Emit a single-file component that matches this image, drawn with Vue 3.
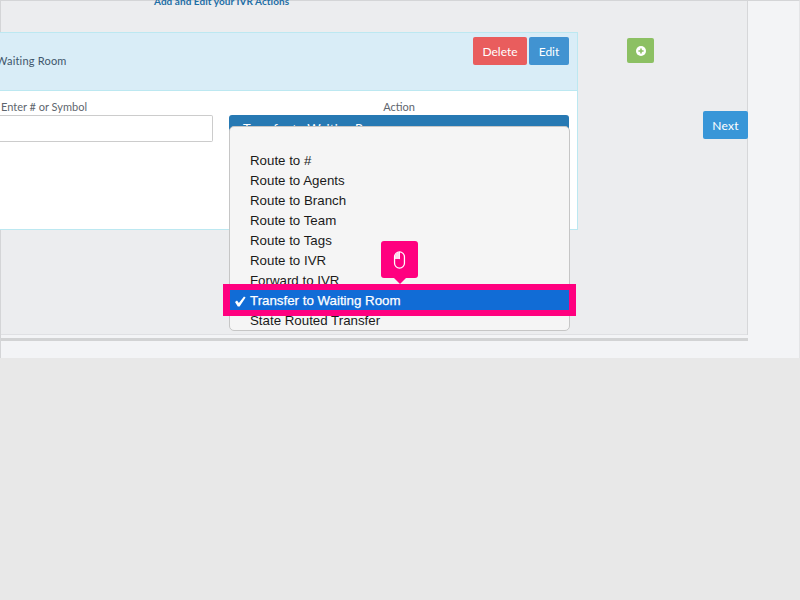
<script setup>
const items = ['Route to #', 'Route to Agents', 'Route to Branch', 'Route to Team', 'Route to Tags', 'Route to IVR', 'Forward to IVR', 'Transfer to Waiting Room', 'State Routed Transfer']
const selected = 'Transfer to Waiting Room'
</script>

<template>
  <div class="page">
    <div class="frame">
      <div class="panel">
        <div class="inner">
          <div class="heading">Add and Edit your IVR Actions</div>
          <div class="row">
            <section class="card">
              <header class="card-head">
                <span class="card-title">Waiting Room</span>
                <div class="card-actions">
                  <button class="btn danger">Delete</button>
                  <button class="btn info">Edit</button>
                </div>
              </header>
              <div class="card-body">
                <div class="col-symbol">
                  <label class="lbl">Enter # or Symbol</label>
                  <div class="input"></div>
                </div>
                <div class="col-action">
                  <label class="lbl center">Action</label>
                  <div class="select">Transfer to Waiting Room</div>
                  <div class="menu">
                    <div v-for="item in items" :key="item" class="opt" :class="{ on: item === selected }">
                      <svg v-if="item === selected" class="check" width="12" height="11" viewBox="0 0 12 11">
                        <path d="M1 6 L3 4.4 L4.9 7 L10 .4 L11.6 1.4 L5.6 10.6 L3.8 10.6 Z" fill="#fff" />
                      </svg>{{ item }}
                    </div>
                  </div>
                  <div class="hilite"></div>
                  <div class="tip">
                    <svg width="13" height="18" viewBox="0 0 14 20">
                      <rect x="1.5" y="1" width="11" height="18" rx="5.5" fill="none" stroke="#fff" stroke-width="1.4" />
                      <path d="M7 1.5a5 5 0 0 0-5 5V9h5z" fill="#fff" fill-opacity=".85" />
                      <path d="M7 1v8" stroke="#fff" stroke-width="1" />
                    </svg>
                  </div>
                </div>
              </div>
            </section>
            <button class="add" aria-label="Add">
              <svg width="10" height="10" viewBox="0 0 10 10">
                <circle cx="5" cy="5" r="5" fill="#fff" />
                <path d="M5 2.4v5.2M2.4 5h5.2" stroke="#8cc063" stroke-width="1.6" />
              </svg>
            </button>
            <button class="next">Next</button>
          </div>
        </div>
        <div class="panel-foot"></div>
      </div>
    </div>
  </div>
</template>

<style scoped>
.page {
  width: 800px;
  height: 600px;
  background: #e8e8e8;
  font-family: Lato, "Open Sans", sans-serif;
  overflow: hidden;
}
.frame {
  height: 358px;
  box-sizing: border-box;
  background: #f3f4f6;
  border-top: 1px solid #d4d5d7;
  border-left: 1px solid #d4d5d7;
  border-right: 1px solid #e4e5e7;
}
.panel {
  width: 747px;
  box-sizing: border-box;
  border-right: 1px solid #d6d7d9;
}
.inner {
  display: flow-root;
  height: 333px;
  background: #ecedef;
  border-bottom: 1px solid #dfe0e3;
  position: relative;
}
.panel-foot {
  height: 3px;
  background: #f3f4f6;
  border-bottom: 3px solid #d2d3d4;
  margin-right: -1px;
}
.heading {
  height: 37px;
  margin-top: -7px;
  padding-left: 153px;
  font-size: 10px;
  line-height: 14px;
  font-weight: 700;
  letter-spacing: .05px;
  color: #1e6fa6;
}
.row {
  display: flex;
  align-items: flex-start;
  padding-top: 1px;
}
.card {
  width: 597px;
  height: 198px;
  flex: none;
  margin-left: -20px;
  box-sizing: border-box;
  background: #fff;
  border: 1px solid #bce8f1;
}
.card-head {
  height: 58px;
  box-sizing: border-box;
  background: #d9edf7;
  border-bottom: 1px solid #bce8f1;
  display: flex;
  justify-content: space-between;
  padding: 4px 8px 0 14px;
}
.card-title {
  margin-top: 16px;
  font-size: 11px;
  line-height: 16px;
  letter-spacing: .2px;
  color: #40566b;
}
.card-actions {
  display: flex;
  gap: 2px;
  align-items: flex-start;
}
.btn, .next, .add {
  border: 0;
  padding: 0;
  color: #fff;
  font-family: inherit;
  font-size: 12px;
  border-radius: 2px;
}
.btn { height: 28px; }
.danger { width: 54px; background: #e95d5d; }
.info { width: 40px; background: #4193d1; }
.card-body {
  display: flex;
  padding-left: 20px;
  padding-top: 9px;
}
.col-symbol {
  width: 231px;
  margin-left: -20px;
  padding-left: 19px;
  box-sizing: border-box;
  flex: none;
}
.lbl {
  display: block;
  height: 15px;
  font-size: 11px;
  line-height: 13px;
  color: #5e666e;
}
.center { text-align: center; }
.input {
  height: 27px;
  box-sizing: border-box;
  background: #fff;
  border: 1px solid #ccc;
  border-left: 0;
  border-radius: 0 2px 2px 0;
  margin-left: -19px;
}
.col-action {
  position: relative;
  width: 340px;
  margin-left: 16px;
}
.select {
  height: 27px;
  box-sizing: border-box;
  background: #2779b3;
  color: #fff;
  border-radius: 3px 3px 0 0;
  padding: 7px 14px;
  font-size: 13px;
  line-height: 14px;
}
.menu {
  position: absolute;
  left: 0;
  top: 26px;
  width: 341px;
  height: 205px;
  box-sizing: border-box;
  padding-top: 24px;
  background: #f5f5f5;
  border: 1px solid #c6c6c6;
  border-radius: 5px;
  overflow: hidden;
  font-family: "Liberation Sans", Arial, sans-serif;
  font-size: 13.3px;
  line-height: 20px;
  color: #1a1a1a;
  z-index: 1;
}
.opt {
  position: relative;
  padding-left: 20px;
  white-space: nowrap;
}
.opt.on {
  margin-top: -1px;
  padding-top: 1px;
  background: #116cd6;
  color: #fff;
  -webkit-text-stroke: .25px #fff;
}
.check {
  position: absolute;
  left: 4px;
  top: 6px;
}
.hilite {
  position: absolute;
  left: -6px;
  top: 184px;
  width: 353px;
  height: 32px;
  box-sizing: border-box;
  border-style: solid;
  border-color: #ff007f;
  border-width: 6px 7px;
  z-index: 2;
}
.tip {
  position: absolute;
  left: 152px;
  top: 141px;
  width: 37px;
  height: 37px;
  background: #ff007f;
  border-radius: 3px;
  display: flex;
  align-items: center;
  justify-content: center;
  z-index: 3;
}
.tip::after {
  content: "";
  position: absolute;
  left: 13px;
  bottom: -6px;
  border: 6px solid transparent;
  border-bottom: 0;
  border-top-color: #ff007f;
}
.add {
  width: 27px;
  height: 25px;
  flex: none;
  margin: 6px 0 0 49px;
  background: #8cc063;
  display: flex;
  align-items: center;
  justify-content: center;
}
.next {
  width: 45px;
  height: 28px;
  flex: none;
  margin: 79px 0 0 49px;
  background: #3896d8;
  letter-spacing: .2px;
}
</style>
